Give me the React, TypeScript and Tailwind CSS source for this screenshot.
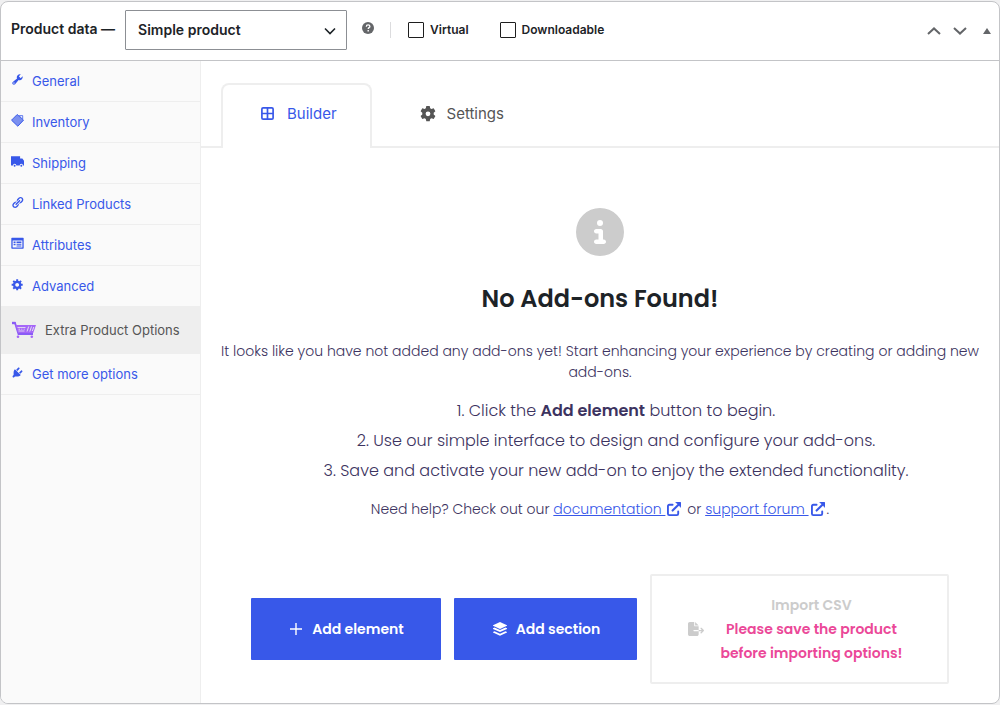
import React from "react";
import { FaCircleInfo, FaFileExport } from "react-icons/fa6";

const WRENCH =
  "M16.68 9.77a4.543 4.543 0 0 1-4.95.99l-5.41 6.52c-.99.99-2.59.99-3.58 0s-.99-2.59 0-3.57l6.52-5.42c-.68-1.65-.35-3.61.99-4.95 1.28-1.28 3.12-1.62 4.72-1.06l-2.89 2.89 2.82 2.82 2.86-2.87c.53 1.58.18 3.39-1.08 4.65zM3.81 16.21c.4.39 1.04.39 1.43 0 .4-.4.4-1.04 0-1.43-.39-.4-1.03-.4-1.43 0-.39.39-.39 1.03 0 1.43z";
const LINK =
  "M17.74 2.76c1.68 1.69 1.68 4.41 0 6.1l-1.53 1.52c-1.12 1.12-2.7 1.47-4.14 1.09l2.62-2.61.76-.77.76-.76c.84-.84.84-2.2 0-3.04-.84-.85-2.2-.85-3.04 0l-.77.76-3.38 3.38c-.37-1.44-.02-3.02 1.1-4.14l1.52-1.53c1.69-1.68 4.42-1.68 6.1 0zM8.59 13.43l5.34-5.34c.42-.42.42-1.1 0-1.52-.44-.43-1.13-.39-1.53 0l-5.33 5.34c-.42.42-.42 1.1 0 1.52.44.43 1.13.39 1.52 0zm-.76 2.29l4.14-4.15c.38 1.44.03 3.02-1.09 4.14l-1.52 1.53c-1.69 1.68-4.41 1.68-6.1 0-1.68-1.68-1.68-4.42 0-6.1l1.53-1.52c1.12-1.12 2.7-1.47 4.14-1.1l-4.14 4.15c-.85.84-.85 2.2 0 3.05.84.84 2.2.84 3.04 0z";
const GEAR =
  "M18 12h-2.18c-.17.7-.44 1.35-.81 1.93l1.54 1.54-2.1 2.1-1.54-1.54c-.58.36-1.23.63-1.91.79V19H8v-2.18c-.68-.16-1.33-.43-1.91-.79l-1.54 1.54-2.12-2.12 1.54-1.54c-.36-.58-.63-1.23-.79-1.91H1V9.03h2.17c.16-.7.44-1.35.8-1.94L2.43 5.55l2.1-2.1 1.54 1.54c.58-.37 1.24-.64 1.93-.81V2h3v2.18c.68.16 1.33.43 1.91.79l1.54-1.54 2.12 2.12-1.54 1.54c.36.59.64 1.24.8 1.94H18V12zm-8.5 1.5c1.66 0 3-1.34 3-3s-1.34-3-3-3-3 1.34-3 3 1.34 3 3 3z";
const PLUG =
  "M13.11 4.36L9.87 7.6 8 5.73l3.24-3.24c.35-.34 1.05-.2 1.56.32.52.51.66 1.21.31 1.55zm-8 1.77l.91-1.12 9.01 9.01-1.19.84c-.71.71-2.63 1.16-3.82 1.16H6.14L4.9 17.26c-.59.59-1.54.59-2.12 0-.59-.58-.59-1.53 0-2.12l1.24-1.24v-3.88c0-1.13.4-3.19 1.09-3.89zm7.26 3.97l3.24-3.24c.34-.35 1.04-.21 1.55.31.52.51.66 1.21.31 1.55l-3.24 3.25z";
const TRUCK =
  "M0 2h14v3.500h3.500L20 9v7h-1.500a2.600 2.600 0 0 0-5.200 0H8.200a2.600 2.600 0 0 0-5.200 0H0zM5.600 14.900a1.500 1.500 0 1 1 0 3a1.500 1.500 0 0 1 0-3zM15.900 14.900a1.500 1.500 0 1 1 0 3a1.500 1.500 0 0 1 0-3z";
const FORM =
  "M1.500 1h17c.6 0 1 .4 1 1v15c0 .6-.4 1-1 1h-17c-.6 0-1-.4-1-1V2c0-.6.4-1 1-1zM2.500 5.500v10.500h15V5.500zM4 7h3v2.200H4zM8.500 7H16v2.200H8.500zM4 10.500h3v2H4zM8.500 10.500H16v1.600H8.500zM8.500 13.200H16v1.600H8.500z";

function Glyph({ d }: { d: string }) {
  return (
    <svg viewBox="0 0 20 20" className="size-[13px] shrink-0" fill="currentColor" fillRule="evenodd" aria-hidden="true">
      <path d={d} />
    </svg>
  );
}

function TagIcon() {
  return (
    <svg viewBox="0 0 20 20" className="size-[13px] shrink-0" fill="none" aria-hidden="true">
      <path d="M.8 9.500 9.500.8 19.200 10 10.500 18.800z" fill="currentColor" opacity=".65" />
      <path d="M.8 9.500 9.500.8 19.200 9.500 10.500 18.800z" stroke="currentColor" strokeWidth="1.500" />
      <path d="M12.500 2.500H18v5.800z" fill="#fafafa" stroke="currentColor" strokeWidth="1.200" />
    </svg>
  );
}

function ExternalIcon() {
  return (
    <svg viewBox="0 0 15 15" className="mx-[2px] inline size-[14px] align-[-2px]" fill="none" aria-hidden="true">
      <path d="M6 3H2.500C1.600 3 1 3.600 1 4.500v8c0 .9.600 1.500 1.500 1.500h8c.9 0 1.500-.6 1.500-1.500V10" stroke="currentColor" strokeWidth="2" strokeLinecap="round" />
      <path d="M6 9.200 12 3.200" stroke="currentColor" strokeWidth="2.200" strokeLinecap="round" />
      <path d="M9 0h5.200c.5 0 .8.300.8.800V6z" fill="currentColor" stroke="currentColor" strokeWidth=".4" />
    </svg>
  );
}

function CartIcon() {
  return (
    <svg viewBox="0 0 24 18" className="h-[18px] w-6 shrink-0" fill="none" aria-hidden="true">
      <path d="M0.500 2H3L6.500 13H21" stroke="#8a5cf6" strokeWidth="1.800" />
      <path d="M0 0.800h3.500v2.400H0z" fill="#8a5cf6" />
      <path d="M3.500 4H24l-2.800 8H6z" fill="#a566f8" />
      <path d="M5.500 6.500h8M6.500 10h6M6.500 8.200h1.600M9.300 8.200h1M11.700 8.200h1" stroke="#ececec" strokeWidth=".8" />
      <path d="m15 10.500 1.700-5M17.800 10.500l1.700-5M20.300 10l1.500-4" stroke="#ececec" strokeWidth=".9" />
      <circle cx="6" cy="15.700" r="1.300" fill="#a566f8" />
      <circle cx="19.800" cy="15.700" r="1.300" fill="#a566f8" />
    </svg>
  );
}

const items: { label: string; icon: React.ReactNode }[] = [
  { label: "General", icon: <Glyph d={WRENCH} /> },
  { label: "Inventory", icon: <TagIcon /> },
  { label: "Shipping", icon: <Glyph d={TRUCK} /> },
  { label: "Linked Products", icon: <Glyph d={LINK} /> },
  { label: "Attributes", icon: <Glyph d={FORM} /> },
  { label: "Advanced", icon: <Glyph d={GEAR} /> },
];

function SideLink({ label, icon }: { label: string; icon: React.ReactNode }) {
  return (
    <li className="border-b border-[#eeeeee]">
      <a href="#" className="flex items-start gap-2 px-[10px] py-3 text-[13px] leading-4 text-[#3858e9]">
        {icon}
        <span>{label}</span>
      </a>
    </li>
  );
}

function Header() {
  return (
    <header className="flex items-center border-b border-[#c3c4c7] pt-2 pr-2 pb-[10px] pl-[10px] text-[#1d2327]">
      <label htmlFor="ptype" className="pb-[2px] text-sm font-semibold">
        Product data —
      </label>
      <div className="relative ml-[10px]">
        <select
          id="ptype"
          className="block h-10 w-[222px] appearance-none rounded-[1px] border border-[#8c8f94] bg-white px-3 text-sm font-semibold text-[#1d2327]"
        >
          <option>Simple product</option>
        </select>
        <svg viewBox="0 0 12 8" className="pointer-events-none absolute top-[17px] right-[11px] h-2 w-3" fill="none" aria-hidden="true">
          <path d="m1 1.500 5 5 5-5" stroke="#1d2327" strokeWidth="1.600" />
        </svg>
      </div>
      <button type="button" aria-label="Help" className="mb-1 ml-[15px] flex">
        <svg viewBox="0 0 12 12" className="size-3" fill="none" aria-hidden="true">
          <circle cx="6" cy="6" r="6" fill="#646669" />
          <path d="M4.300 4.700c0-1.300.8-1.800 1.800-1.800s1.800.6 1.800 1.500c0 1.300-1.700 1.200-1.700 2.500" stroke="#fff" strokeWidth="1.300" />
          <path d="M5.500 8h1.400v1.400H5.500z" fill="#fff" />
        </svg>
      </button>
      <div className="ml-4 flex items-center gap-[31px] border-l border-[#dcdcde] pl-[17px] text-xs leading-4 font-semibold">
        <label className="flex items-center gap-[6px]">
          <input type="checkbox" className="size-4 appearance-none rounded-[1px] border border-[#1e1e1e] bg-white" />
          Virtual
        </label>
        <label className="flex items-center gap-[6px]">
          <input type="checkbox" className="size-4 appearance-none rounded-[1px] border border-[#1e1e1e] bg-white" />
          Downloadable
        </label>
      </div>
      <div className="ml-auto flex items-center gap-3 pt-[2px] text-[#646669]">
        <button type="button" aria-label="Move up">
          <svg viewBox="0 0 14 8" className="h-2 w-[14px]" fill="none" aria-hidden="true">
            <path d="m1 7 6-5.600L13 7" stroke="currentColor" strokeWidth="2" />
          </svg>
        </button>
        <button type="button" aria-label="Move down">
          <svg viewBox="0 0 14 8" className="h-2 w-[14px]" fill="none" aria-hidden="true">
            <path d="m1 1 6 5.600L13 1" stroke="currentColor" strokeWidth="2" />
          </svg>
        </button>
        <button type="button" aria-label="Toggle panel" className="ml-1">
          <svg viewBox="0 0 8 6" className="h-[6px] w-2" aria-hidden="true">
            <path d="M4 0 8 6H0z" fill="currentColor" />
          </svg>
        </button>
      </div>
    </header>
  );
}

export default function App() {
  return (
    <div className="flex min-h-screen flex-col bg-[#f0f0f1] py-px font-['Inter','Noto_Sans',sans-serif]">
      <section className="flex grow flex-col overflow-hidden rounded-lg border border-[#c3c4c7] bg-white">
        <Header />
        <div className="flex grow">
          <aside className="w-[200px] shrink-0 border-r border-[#eeeeee] bg-[#fafafa]">
            <ul>
              {items.map((i) => (
                <SideLink key={i.label} {...i} />
              ))}
              <li className="border-b border-[#eeeeee]">
                <a href="#" className="flex items-center gap-[9px] bg-[#eeeeee] px-[11px] py-[14px] text-[13px] leading-[18px] text-[#555555]">
                  <CartIcon />
                  Extra Product Options
                </a>
              </li>
              <SideLink label="Get more options" icon={<Glyph d={PLUG} />} />
            </ul>
          </aside>

          <main className="min-w-0 grow">
            <nav className="flex border-b-2 border-[#eeeeee] px-5 pt-[22px] text-[15px] leading-[21px]">
              <button
                type="button"
                className="-mb-[2px] flex items-center gap-[13px] rounded-t-lg border-2 border-b-0 border-[#eeeeee] bg-white pt-[18px] pr-[33px] pb-6 pl-[38px] text-[#3858e9]"
              >
                <svg viewBox="0 0 13 13" className="size-[13px]" fill="none" stroke="currentColor" strokeWidth="1.700" aria-hidden="true">
                  <rect x=".9" y=".9" width="11.200" height="11.200" rx="1.200" />
                  <path d="M6.500 1v11M1 6.500h11" />
                </svg>
                Builder
              </button>
              <button
                type="button"
                className="-mb-[2px] flex items-center gap-[11px] border-t-2 border-transparent pt-[18px] pr-[33px] pb-6 pl-12 text-[#555555]"
              >
                <svg viewBox="0 0 16 16" className="size-4" fill="currentColor" fillRule="evenodd" aria-hidden="true">
                  <path d="M6.300 0h3.400l.5 2.300 1.200.7 2.300-.8 1.700 3-1.700 1.600v1.700l1.700 1.600-1.700 3-2.300-.8-1.200.7-.5 2.300H6.300L5.800 13l-1.200-.7-2.300.8-1.700-3 1.700-1.600V6.800L.6 5.200l1.700-3 2.300.8 1.200-.7zM8 5.400a2.400 2.400 0 1 0 0 4.800 2.400 2.400 0 0 0 0-4.800z" />
                </svg>
                Settings
              </button>
            </nav>

            <div className="flex flex-col items-center px-[18px] pt-[60px] pb-4 text-center font-['Poppins','Inter',sans-serif] text-sm font-light text-[#3c3360]">
              <FaCircleInfo className="size-12 text-[#cccccc]" aria-hidden="true" />
              <h2 className="mt-[27px] text-2xl leading-8 font-semibold text-[#1d2327]">No Add-ons Found!</h2>
              <p className="mt-[26px] leading-[21px]">
                It looks like you have not added any add-ons yet! Start enhancing your experience by creating or adding new
                add-ons.
              </p>
              <ol className="mt-[13px] list-inside list-decimal pl-8 text-base leading-[30px]">
                <li>
                  Click the <strong className="font-semibold">Add element</strong> button to begin.
                </li>
                <li>Use our simple interface to design and configure your add-ons.</li>
                <li>Save and activate your new add-on to enjoy the extended functionality.</li>
              </ol>
              <p className="mt-[13px] leading-[21px]">
                Need help? Check out our{" "}
                <a href="#" className="text-[#3858e9] underline">
                  documentation <ExternalIcon />
                </a>{" "}
                or{" "}
                <a href="#" className="text-[#3858e9] underline">
                  support forum <ExternalIcon />
                </a>
                .
              </p>

              <div className="mt-[54px] flex items-center justify-center gap-[13px] font-semibold">
                <button type="button" className="flex h-[62px] w-[190px] items-center justify-center gap-[10px] rounded-[1px] bg-[#3858e9] pl-[2px] text-white">
                  <svg viewBox="0 0 12 12" className="size-3" stroke="currentColor" strokeWidth="1.400" aria-hidden="true">
                    <path d="M6 0v12M0 6h12" />
                  </svg>
                  Add element
                </button>
                <button type="button" className="flex h-[62px] w-[183px] items-center justify-center gap-[9px] rounded-[1px] bg-[#3858e9] pl-[2px] text-white">
                  <svg viewBox="0 0 14 14" className="size-[14px]" fill="currentColor" aria-hidden="true">
                    <path d="M7 0 14 3.200v.6L7 7 0 3.800v-.6z" />
                    <path d="m0 6.300 1.500-.7L7 8.100l5.500-2.500 1.500.7v.6L7 10.100 0 6.900zM0 9.900l1.500-.7L7 11.700l5.500-2.500 1.500.7v.6L7 13.800 0 10.500z" />
                  </svg>
                  Add section
                </button>
                <button
                  type="button"
                  disabled
                  className="flex w-[299px] items-center justify-center gap-4 rounded-[2px] border-2 border-[#eeeeee] bg-white py-[17px] pr-2 leading-6 text-[#cccccc]"
                >
                  <FaFileExport className="size-4 shrink-0" aria-hidden="true" />
                  <span className="flex flex-col">
                    Import CSV
                    <span className="text-[#eb4898]">Please save the product</span>
                    <span className="text-[#eb4898]">before importing options!</span>
                  </span>
                </button>
              </div>
            </div>
          </main>
        </div>
      </section>
    </div>
  );
}
